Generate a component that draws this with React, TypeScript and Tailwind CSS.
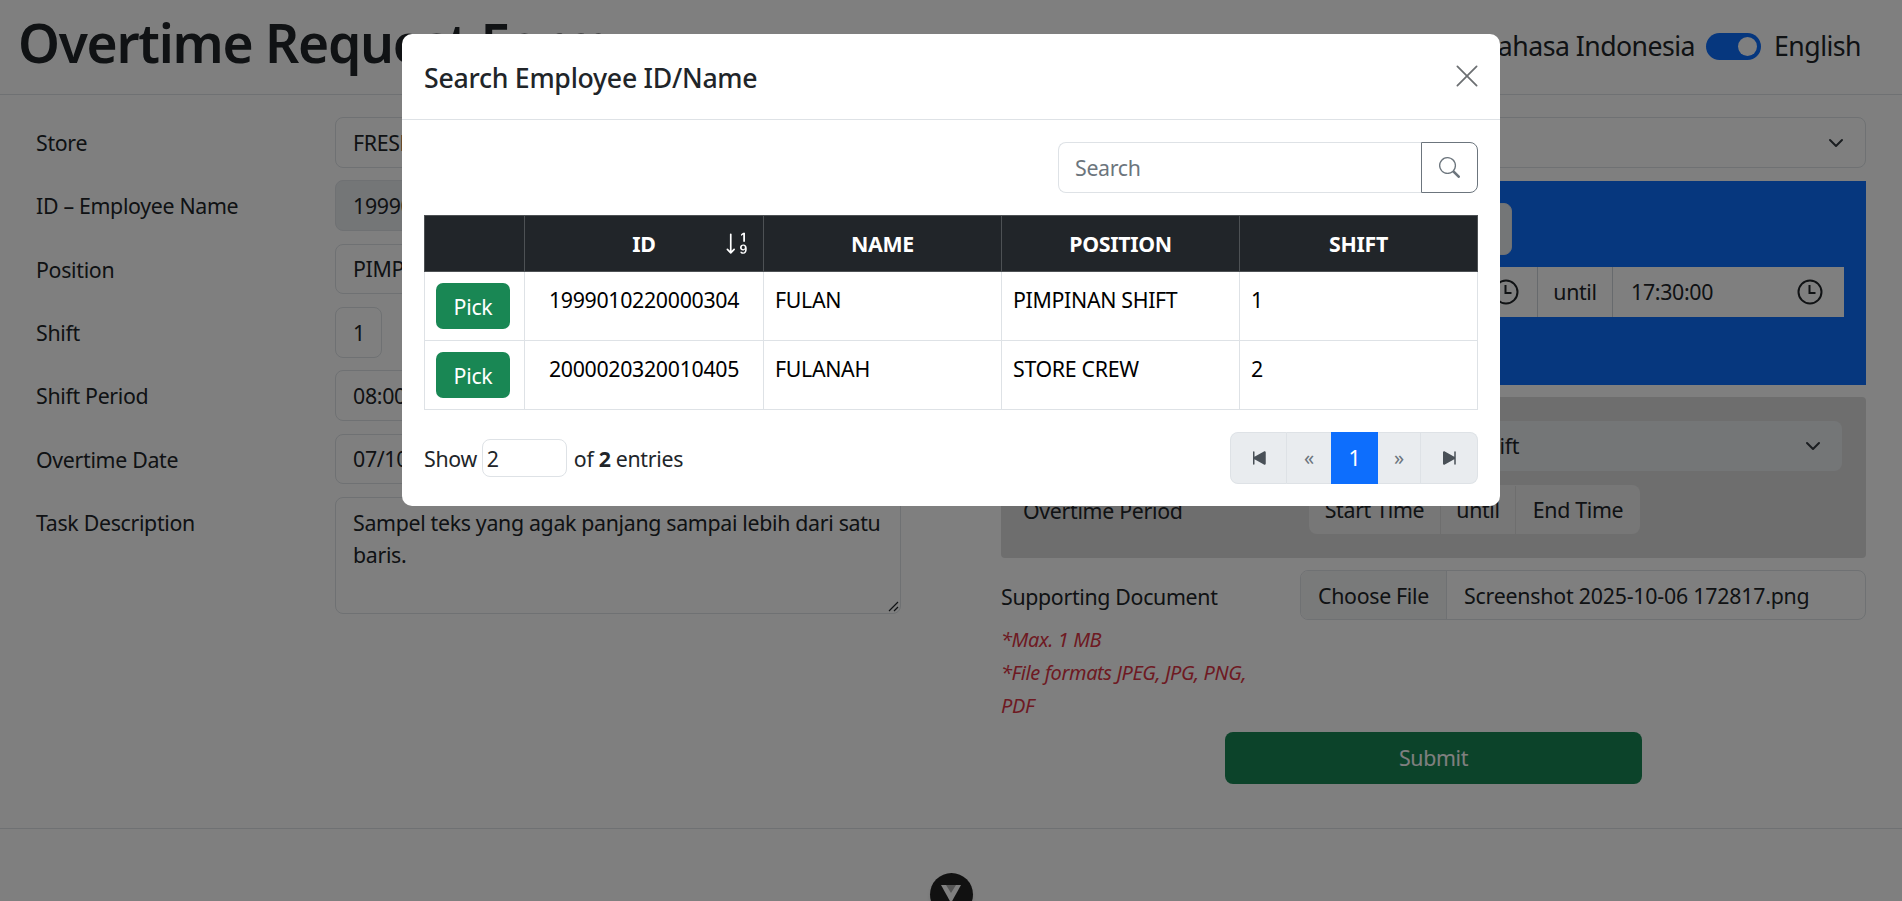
import React from 'react';
import { ChevronDown } from 'lucide-react';
import { BsSearch, BsSkipEndFill, BsSkipStartFill, BsSortNumericDown, BsXLg } from 'react-icons/bs';

const inputCls = 'h-[50.67px] border border-[#dee2e6] rounded-[8px] px-[17px] pt-[1px] flex items-center whitespace-nowrap overflow-hidden';

const ClockIcon = () => (
  <svg width="26" height="26" viewBox="0 0 26 26" fill="none" stroke="#212529" strokeWidth="2">
    <circle cx="13" cy="13" r="11.5" />
    <path d="M12.5 6v8h6" />
  </svg>
);

const FormRow = ({ label, children }: { label: string; children: React.ReactNode }) => (
  <div className="flex">
    <div className="w-[299px] shrink-0 pt-[10px]">{label}</div>
    <div className="flex-1">{children}</div>
  </div>
);

const SelectBox = ({ value, className }: { value: string; className?: string }) => (
  <div className={`${inputCls} justify-between ${className ?? ''}`}>
    <span>{value}</span>
    <ChevronDown size={24} strokeWidth={2} className="text-[#343a40]" />
  </div>
);

const employees = [
  { id: '1999010220000304', name: 'FULAN', position: 'PIMPINAN SHIFT', shift: '1' },
  { id: '2000020320010405', name: 'FULANAH', position: 'STORE CREW', shift: '2' },
];

const PageBehind = () => (
  <div>
    <header className="h-[95px] border-b border-[#dee2e6] flex items-center justify-between pl-[18px] pr-[41px]">
      <h1 className="text-[53.33px] font-semibold leading-[64px] -mt-[9px] tracking-[-0.024em]">Overtime Request Form</h1>
      <div className="flex items-center text-[26.67px] -mt-[2px] tracking-[-0.02em]">
        <span>Bahasa Indonesia</span>
        <div className="w-[55px] h-[27px] rounded-full bg-[#0d6efd] ml-[11px] mr-[13px] flex items-center justify-end pr-[4px]">
          <div className="w-[19px] h-[19px] rounded-full bg-white" />
        </div>
        <span>English</span>
      </div>
    </header>
    <main className="flex gap-[100px] px-[36px] pt-[22px]">
      <div className="w-[865px] flex flex-col gap-[12.67px]">
        <FormRow label="Store"><SelectBox value="FRESH MART" /></FormRow>
        <FormRow label="ID – Employee Name"><div className={`${inputCls} bg-[#e9ecef]`}>1999010220000304 - FULAN</div></FormRow>
        <FormRow label="Position"><div className={inputCls}>PIMPINAN SHIFT</div></FormRow>
        <FormRow label="Shift"><div className={`${inputCls} w-[47px]`}>1</div></FormRow>
        <FormRow label="Shift Period"><div className={inputCls}>08:00:00 until 17:30:00</div></FormRow>
        <FormRow label="Overtime Date"><div className={inputCls}>07/10/2025</div></FormRow>
        <FormRow label="Task Description">
          <div className="relative h-[117px] border border-[#dee2e6] rounded-[8px] px-[17px] py-[9px]">
            Sampel teks yang agak panjang sampai lebih dari satu baris.
            <svg className="absolute right-[1px] bottom-[1px]" width="12" height="12" viewBox="0 0 12 12" stroke="#212529" strokeWidth="1.2">
              <path d="M11 2 2 11M11 7l-4 4" />
            </svg>
          </div>
        </FormRow>
      </div>
      <div className="w-[865px] flex flex-col">
        <FormRow label="Overtime Type"><SelectBox value="Overtime" /></FormRow>
        <div className="mt-[13px] h-[204px] bg-[#0d6efd] p-[22px] flex flex-col gap-[12px]">
          <div className="flex">
            <div className="w-[286px] pt-[11px]">Before Shift</div>
            <div className={`${inputCls} w-[203px] !h-[52px] bg-[#e9ecef]`}>30 Minutes</div>
          </div>
          <div className="flex">
            <div className="w-[286px] pt-[11px]">Overtime Period</div>
            <div className="flex h-[50px] flex-1 bg-white">
              <div className="w-[228px] flex items-center justify-between px-[18px]"><span>08:00:00</span><ClockIcon /></div>
              <div className="w-[76px] pt-[1px] flex items-center justify-center border-x border-[#ced4da]">until</div>
              <div className="flex-1 pt-[1px] flex items-center justify-between pl-[18px] pr-[21px]"><span>17:30:00</span><ClockIcon /></div>
            </div>
          </div>
        </div>
        <div className="mt-[12px] h-[161px] bg-[#dddddd] rounded-[4px] pt-[24px] pl-[22px] pr-[24px] flex flex-col gap-[14px]">
          <div className="flex">
            <div className="w-[286px] pt-[11px]">After Shift</div>
            <SelectBox value="Overtime After Shift" className="flex-1 !h-[50px] border-0 bg-[#e9ecef]" />
          </div>
          <div className="flex">
            <div className="w-[286px] pt-[10px]">Overtime Period</div>
            <div className="flex h-[49px] pt-[1px] bg-[#eeeeee] rounded-[8px]">
              <div className="w-[131px] flex items-center justify-center">Start Time</div>
              <div className="w-[76px] flex items-center justify-center border-x border-[#dddddd]">until</div>
              <div className="w-[124px] flex items-center justify-center">End Time</div>
            </div>
          </div>
        </div>
        <div className="mt-[12px] flex">
          <div className="w-[299px] shrink-0 pt-[11px]">Supporting Document</div>
          <div className={`${inputCls} flex-1 !h-[50px] !px-0 !pt-0`}>
            <div className="h-full w-[146px] pt-[2px] flex items-center justify-center bg-[#f3f4f5] border-r border-[#dee2e6]">Choose File</div>
            <span className="pl-[17px] pt-[2px] tracking-[-0.01em]">Screenshot 2025-10-06 172817.png</span>
          </div>
        </div>
        <div className="mt-[3px] w-[250px] italic text-[#dc3545] text-[20px] leading-[33px] tracking-[-0.02em]">
          <p>*Max. 1 MB</p>
          <p>*File formats JPEG, JPG, PNG, PDF</p>
        </div>
        <button className="mt-[10px] ml-[224px] w-[417px] h-[52px] bg-[#198754] rounded-[8px] text-white">Submit</button>
      </div>
    </main>
    <footer className="mt-[44px] border-t border-[#dee2e6] flex justify-center pt-[44px]">
      <div className="w-[43px] h-[43px] rounded-full bg-[#222222] shadow-md flex justify-center pt-[12px]">
        <svg width="20" height="18" viewBox="0 0 20 18">
          <polygon points="0,0 20,0 10,18" fill="#ffffff" />
          <polygon points="5,0 15,0 10,8" fill="#aaaaaa" />
        </svg>
      </div>
    </footer>
  </div>
);

const EmployeeModal = () => (
  <div className="fixed inset-0 bg-black/50 flex justify-center items-start pt-[34px]">
    <div className="w-[1098px] bg-white rounded-[10px]">
      <div className="h-[86px] border-b border-[#dee2e6] flex items-center justify-between pl-[22px] pr-[19px]">
        <h2 className="text-[26.67px] font-medium tracking-[-0.01em] mt-[2px]">Search Employee ID/Name</h2>
        <BsXLg size={28} className="text-[#6c6f72] -mt-[2px]" />
      </div>
      <div className="px-[22px] pt-[22px]">
        <div className="flex justify-end">
          <input
            placeholder="Search"
            className="w-[363px] h-[51px] border border-r-0 border-[#dee2e6] rounded-l-[8px] px-[16px] outline-none placeholder:text-[#6c757d]"
          />
          <button className="w-[57px] h-[51px] border border-[#6c757d] rounded-r-[8px] flex items-center justify-center text-[#6c757d]">
            <BsSearch size={21} />
          </button>
        </div>
        <table className="mt-[22px] w-[1053px] ml-auto mr-[1px] table-fixed border-collapse">
          <colgroup>
            <col className="w-[100px]" />
            <col className="w-[239px]" />
            <col className="w-[238px]" />
            <col className="w-[238px]" />
            <col className="w-[238px]" />
          </colgroup>
          <thead>
            <tr className="h-[56px] bg-[#212529] text-white font-bold">
              <th className="border border-[#4d5154]" />
              <th className="border border-[#4d5154] relative">
                ID
                <BsSortNumericDown size={27} className="absolute right-[12px] top-[14px]" />
              </th>
              <th className="border border-[#4d5154]">NAME</th>
              <th className="border border-[#4d5154]">POSITION</th>
              <th className="border border-[#4d5154]">SHIFT</th>
            </tr>
          </thead>
          <tbody>
            {employees.map((e) => (
              <tr key={e.id} className="h-[69px] text-black">
                <td className="border border-[#dee2e6] px-[11px] align-middle">
                  <button className="w-[74px] h-[46px] pt-[1px] bg-[#198754] rounded-[7px] text-white">Pick</button>
                </td>
                <td className="border border-[#dee2e6] px-[11px] pt-[12px] align-top text-center">{e.id}</td>
                <td className="border border-[#dee2e6] px-[11px] pt-[12px] align-top">{e.name}</td>
                <td className="border border-[#dee2e6] px-[11px] pt-[12px] align-top">{e.position}</td>
                <td className="border border-[#dee2e6] px-[11px] pt-[12px] align-top">{e.shift}</td>
              </tr>
            ))}
          </tbody>
        </table>
        <div className="flex justify-between items-start mt-[22px] pb-[22px]">
          <div className="flex items-center mt-[7px] h-[38px]">
            <span className="mt-[2px]">Show</span>
            <input readOnly value="2" className="w-[85px] h-[38px] ml-[5px] mr-[7px] pl-[4px] border border-[#dee2e6] rounded-[8px] outline-none" />
            <span className="mt-[2px]">of <b>2</b> entries</span>
          </div>
          <div className="flex h-[52px] rounded-[8px] overflow-hidden bg-[#e9ecef] text-[#495057]">
            <div className="w-[57px] flex items-center justify-center border border-[#dee2e6] rounded-l-[8px]"><BsSkipStartFill size={24} /></div>
            <div className="w-[44px] flex items-center justify-center border-y border-[#dee2e6] text-[20px] text-[#6c757d]">«</div>
            <div className="w-[47px] flex items-center justify-center bg-[#0d6efd] text-white">1</div>
            <div className="w-[43px] flex items-center justify-center border-y border-r border-[#dee2e6] text-[20px] text-[#6c757d]">»</div>
            <div className="w-[57px] flex items-center justify-center border-y border-r border-[#dee2e6] rounded-r-[8px]"><BsSkipEndFill size={24} /></div>
          </div>
        </div>
      </div>
    </div>
  </div>
);

export default function App() {
  return (
    <div className="h-screen overflow-hidden bg-white text-[#212529] text-[21.33px] leading-[32px] font-['Noto_Sans',sans-serif] tracking-[-0.015em]">
      <PageBehind />
      <EmployeeModal />
    </div>
  );
}
